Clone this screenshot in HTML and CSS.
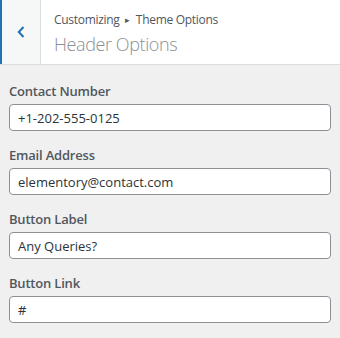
FILE: index.html
```html
<!DOCTYPE html>
<html lang="en">
<head>
    <meta charset="UTF-8">
    <title>Header Options</title>
    <link rel="stylesheet" href="styles.css">
</head>
<body>

<div class="section-header">
    <button class="back" type="button" aria-label="Back">
        <svg width="8" height="12" viewBox="0 0 8 12">
            <path d="M6.5 1 L1.8 6 L6.5 11" fill="none" stroke="#2271b1" stroke-width="2"/>
        </svg>
    </button>
    <div class="section-title">
        <span class="crumb">Customizing <span class="sep">&#9656;</span> Theme Options</span>
        <h3>Header Options</h3>
    </div>
</div>

<ul class="controls">
    <li class="control">
        <label for="contact">Contact Number</label>
        <input type="text" id="contact" value="+1-202-555-0125">
    </li>
    <li class="control">
        <label for="email">Email Address</label>
        <input type="text" id="email" value="elementory@contact.com">
    </li>
    <li class="control">
        <label for="btn-label">Button Label</label>
        <input type="text" id="btn-label" value="Any Queries?">
    </li>
    <li class="control">
        <label for="btn-link">Button Link</label>
        <input type="text" id="btn-link" value="#">
    </li>
</ul>

</body>
</html>
```

FILE: styles.css
```css
body {
    margin: 0;
    background-color: #f0f0f1;
    font-family: 'Open Sans', 'Noto Sans', Arial, sans-serif;
    color: #50575e;
}
.section-header {
    display: flex;
    height: 64px;
    background-color: white;
    border-bottom: 1px solid #dcdcde;
}
.back {
    width: 41px;
    padding: 0;
    background-color: #f6f7f7;
    border: none;
    border-left: 2px solid #2271b1;
    border-right: 1px solid #dcdcde;
    display: flex;
    align-items: center;
    justify-content: center;
    cursor: pointer;
}
.section-title {
    padding: 11px 0 0 13px;
}
.crumb {
    display: block;
    font-size: 12px;
    line-height: 18px;
    letter-spacing: -0.3px;
    color: #50575e;
}
.sep {
    font-size: 9px;
    padding: 0 3px;
    position: relative;
    top: -1px;
}
h3 {
    margin: 0;
    font-size: 18px;
    font-weight: 300;
    line-height: 28px;
    letter-spacing: -0.4px;
    color: #8c8f94;
}
.controls {
    list-style: none;
    margin: 0;
    padding: 13px 9px 0 9px;
}
.control {
    margin-bottom: 11px;
}
label {
    display: block;
    font-size: 13px;
    font-weight: 600;
    line-height: 26px;
    letter-spacing: -0.2px;
    color: #50575e;
}
input {
    display: block;
    width: 100%;
    height: 27px;
    box-sizing: border-box;
    padding: 0 8px;
    font-family: inherit;
    font-size: 13px;
    color: #2c3338;
    background: white;
    border: 1px solid #8c8f94;
    border-radius: 4px;
}
```
